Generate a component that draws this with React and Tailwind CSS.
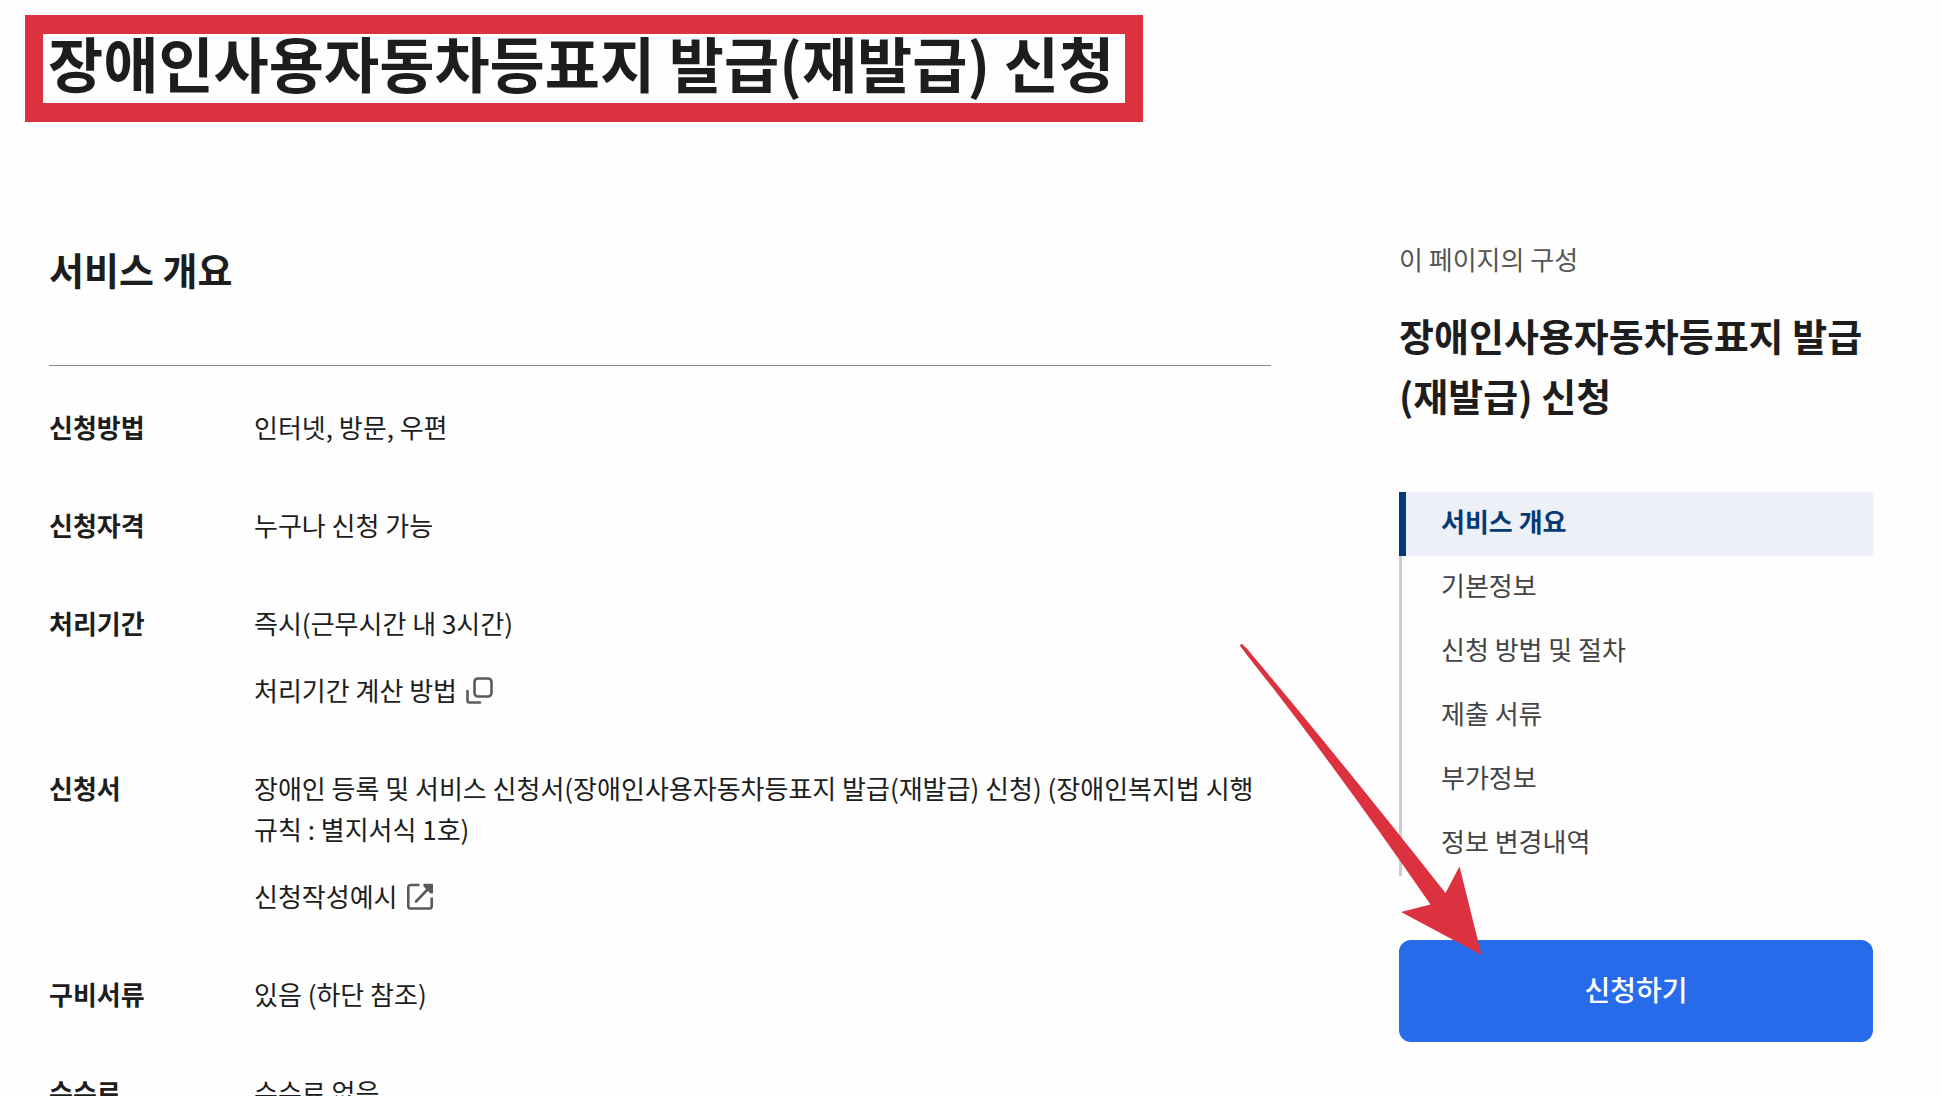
import React from 'react'

const SECTIONS = ['서비스 개요', '기본정보', '신청 방법 및 절차', '제출 서류', '부가정보', '정보 변경내역']

const PopupIcon = () => (
  <svg className="size-7 shrink-0" viewBox="0 0 28 28" fill="none" stroke="#5a5a5a" strokeWidth="2.6" strokeLinecap="round" strokeLinejoin="round" aria-hidden="true">
    <rect x="9.500" y="2.500" width="17" height="18" rx="3.500" />
    <path d="M2.500 15v9.500a2 2 0 0 0 2 2H15" />
  </svg>
)

const ExternalIcon = () => (
  <svg className="size-7 shrink-0" viewBox="0 0 28 28" fill="none" stroke="#5a5a5a" strokeWidth="2.6" aria-hidden="true">
    <path d="M13.500 3H4.500A2.200 2.200 0 0 0 2.300 5.200V24.300A2.200 2.200 0 0 0 4.500 26.500H23.500A2.200 2.200 0 0 0 25.700 24.300V15.500" />
    <path d="M10 19.500L24 5" strokeLinecap="round" />
    <path d="M17.500 1.700H27V11.500H24.400L17.500 4.300Z" fill="#5a5a5a" stroke="none" />
  </svg>
)

const Row = ({ label, children }) => (
  <div className="flex">
    <dt className="w-[205px] shrink-0 font-bold">{label}</dt>
    <dd className="flex flex-1 flex-col items-start gap-[26px]">{children}</dd>
  </div>
)

const Overview = () => {
  return (
    <section className="min-w-0 flex-1">
      <h2 className="pb-[66px] text-[38px] leading-[60px] font-bold">서비스 개요</h2>
      <dl className="flex flex-col gap-[57px] border-t border-[#8a8a8a] pt-10 text-[26px] leading-[41px]">
        <Row label="신청방법">
          <p>인터넷, 방문, 우편</p>
        </Row>
        <Row label="신청자격">
          <p>누구나 신청 가능</p>
        </Row>
        <Row label="처리기간">
          <p>즉시(근무시간 내 3시간)</p>
          <button type="button" className="flex items-center gap-2">
            처리기간 계산 방법
            <PopupIcon />
          </button>
        </Row>
        <Row label="신청서">
          <p>
            장애인 등록 및 서비스 신청서(장애인사용자동차등표지 발급(재발급) 신청) (장애인복지법 시행규칙 : 별지서식 1호)
          </p>
          <a href="#example" className="flex items-center gap-2">
            신청작성예시
            <ExternalIcon />
          </a>
        </Row>
        <Row label="구비서류">
          <p>있음 (하단 참조)</p>
        </Row>
        <Row label="수수료">
          <p>수수료 없음</p>
        </Row>
      </dl>
    </section>
  )
}

const PageNav = () => {
  return (
    <aside className="w-[474px] shrink-0">
      <p className="text-[26px] leading-10 text-[#555]">이 페이지의 구성</p>
      <h2 className="mt-[26px] text-[38px] leading-[60px] font-bold">장애인사용자동차등표지 발급(재발급) 신청</h2>

      {/* SECTION LINKS */}
      <nav className="mt-[67px] text-[26px] leading-[58px] text-[#444]">
        {SECTIONS.map((name, i) => (
          <a
            key={name}
            href={`#section-${i + 1}`}
            className={
              i === 0
                ? 'block border-l-[7px] border-[#063a74] bg-[#edf1f7] pb-1.5 pl-[35px] font-bold text-[#063a74]'
                : 'block border-l-[3px] border-[#cdcdcd] pb-1.5 pl-[39px]'
            }
          >
            {name}
          </a>
        ))}
      </nav>

      {/* APPLY BUTTON */}
      <div className="relative mt-16">
        <button type="button" className="h-[102px] w-full rounded-xl bg-[#256bea] pb-1 text-[28px] font-medium text-white">
          신청하기
        </button>
        <svg className="pointer-events-none absolute -top-[300px] -left-[160px] h-[320px] w-[250px]" viewBox="0 0 250 320" fill="#dc323f" aria-hidden="true">
          <path d="M0.500 5L3 4Q7 7 14 16Q100 118 206.500 253L220.500 226.500L242.500 315L162 272L191.500 264.500Q104 138 30 43Q13 22 0.500 5Z" />
        </svg>
      </div>
    </aside>
  )
}

export default function App() {
  return (
    <div className="min-h-screen bg-[#fefefe] font-['Noto_Sans_CJK_KR',sans-serif] text-[#1d1d1d]">
      <header className="flex pt-[15px] pl-[25px]">
        <h1 className="border-x-[18px] border-y-[19px] border-[#dc323f] pr-[11px] pb-[14px] pl-[5px] text-[60px] leading-[55px] font-bold">
          장애인사용자동차등표지 발급(재발급) 신청
        </h1>
      </header>
      <main className="flex gap-32 pt-[117px] pr-[69px] pl-[49px]">
        <Overview />
        <PageNav />
      </main>
    </div>
  )
}
